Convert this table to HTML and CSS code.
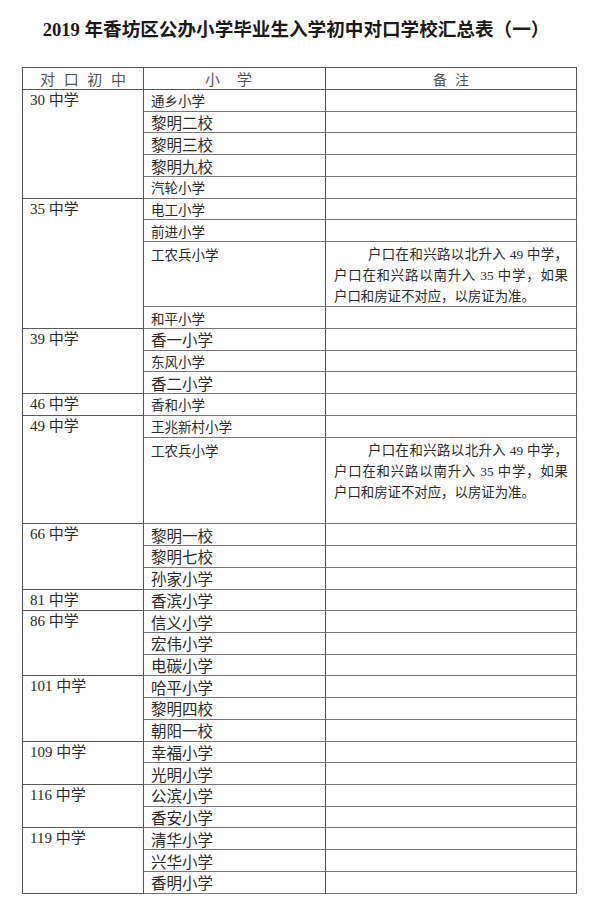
FILE: index.html
```html
<!DOCTYPE html>
<html lang="zh-CN">
<head>
<meta charset="utf-8">
<title>2019年香坊区公办小学毕业生入学初中对口学校汇总表（一）</title>
<link rel="stylesheet" href="styles.css">
</head>
<body>
<div class="page">
  <h1 class="title">2019 年香坊区公办小学毕业生入学初中对口学校汇总表（一）</h1>
  <div class="sheet">
    <div class="hd c1"><span class="hd-wide">对口初中</span></div>
    <div class="hd c2"><span class="hd-mid">小学</span></div>
    <div class="hd c3"><span class="hd-narrow">备注</span></div>

    <div class="grp c1 span5">30 中学</div>
    <div class="cell c2 sm">通乡小学</div><div class="cell c3"></div>
    <div class="cell c2 lg">黎明二校</div><div class="cell c3"></div>
    <div class="cell c2 lg">黎明三校</div><div class="cell c3"></div>
    <div class="cell c2 lg">黎明九校</div><div class="cell c3"></div>
    <div class="cell c2 sm">汽轮小学</div><div class="cell c3"></div>

    <div class="grp c1 span6">35 中学</div>
    <div class="cell c2 sm">电工小学</div><div class="cell c3"></div>
    <div class="cell c2 sm">前进小学</div><div class="cell c3"></div>
    <div class="cell top c2 sm span3">工农兵小学</div>
    <div class="note c3 span3">户口在和兴路以北升入 49 中学，户口在和兴路以南升入 35 中学，如果户口和房证不对应，以房证为准。</div>
    <div class="cell c2 sm">和平小学</div><div class="cell c3"></div>

    <div class="grp c1 span3">39 中学</div>
    <div class="cell c2 lg">香一小学</div><div class="cell c3"></div>
    <div class="cell c2 sm">东风小学</div><div class="cell c3"></div>
    <div class="cell c2 lg">香二小学</div><div class="cell c3"></div>

    <div class="grp c1">46 中学</div>
    <div class="cell c2 sm">香和小学</div><div class="cell c3"></div>

    <div class="grp c1 span5">49 中学</div>
    <div class="cell c2 sm">王兆新村小学</div><div class="cell c3"></div>
    <div class="cell top c2 sm span4">工农兵小学</div>
    <div class="note c3 span4">户口在和兴路以北升入 49 中学，户口在和兴路以南升入 35 中学，如果户口和房证不对应，以房证为准。</div>

    <div class="grp c1 span3">66 中学</div>
    <div class="cell c2 lg">黎明一校</div><div class="cell c3"></div>
    <div class="cell c2 lg">黎明七校</div><div class="cell c3"></div>
    <div class="cell c2 lg">孙家小学</div><div class="cell c3"></div>

    <div class="grp c1">81 中学</div>
    <div class="cell c2 lg">香滨小学</div><div class="cell c3"></div>

    <div class="grp c1 span3">86 中学</div>
    <div class="cell c2 lg">信义小学</div><div class="cell c3"></div>
    <div class="cell c2 lg">宏伟小学</div><div class="cell c3"></div>
    <div class="cell c2 lg">电碳小学</div><div class="cell c3"></div>

    <div class="grp c1 span3">101 中学</div>
    <div class="cell c2 lg">哈平小学</div><div class="cell c3"></div>
    <div class="cell c2 lg">黎明四校</div><div class="cell c3"></div>
    <div class="cell c2 lg">朝阳一校</div><div class="cell c3"></div>

    <div class="grp c1 span2">109 中学</div>
    <div class="cell c2 lg">幸福小学</div><div class="cell c3"></div>
    <div class="cell c2 lg">光明小学</div><div class="cell c3"></div>

    <div class="grp c1 span2">116 中学</div>
    <div class="cell c2 lg">公滨小学</div><div class="cell c3"></div>
    <div class="cell c2 lg">香安小学</div><div class="cell c3"></div>

    <div class="grp c1 span3">119 中学</div>
    <div class="cell c2 lg">清华小学</div><div class="cell c3"></div>
    <div class="cell c2 lg">兴华小学</div><div class="cell c3"></div>
    <div class="cell c2 lg">香明小学</div><div class="cell c3"></div>
  </div>
</div>
</body>
</html>
```

FILE: styles.css
```css
html, body {
  margin: 0;
  padding: 0;
  background: #ffffff;
}

body {
  font-family: "Liberation Serif", "Noto Sans CJK SC", serif;
  color: #262626;
}

.page {
  padding-top: 19px;
  width: 592px;
}

.title {
  margin: 0;
  font-size: 18.6px;
  line-height: 22px;
  font-weight: 700;
  text-align: center;
  color: #1a1a1a;
}

.sheet {
  margin: 26px 0 0 22px;
  width: 555px;
  box-sizing: border-box;
  display: grid;
  grid-template-columns: 121px 182px 251px;
  grid-template-rows: 22px;
  grid-auto-rows: 21.73px;
  border-top: 1px solid #555;
  border-left: 1px solid #555;
}

.c1 { grid-column: 1; }
.c2 { grid-column: 2; }
.c3 { grid-column: 3; }

.span2 { grid-row: span 2; }
.span3 { grid-row: span 3; }
.span4 { grid-row: span 4; }
.span5 { grid-row: span 5; }
.span6 { grid-row: span 6; }

.hd, .grp, .cell, .note {
  box-sizing: border-box;
  border-right: 1px solid #555;
  border-bottom: 1px solid #5a5a5a;
  min-width: 0;
}

.hd {
  display: flex;
  align-items: center;
  justify-content: center;
  font-size: 15px;
  color: #555;
}

.hd-wide {
  letter-spacing: 8.6px;
  padding-left: 8.6px;
}

.hd-mid {
  letter-spacing: 17px;
  padding-left: 5px;
}

.hd-narrow {
  letter-spacing: 8px;
  padding-left: 8px;
  font-size: 14px;
}

.grp {
  padding-left: 7px;
  font-size: 15px;
  line-height: 21px;
  color: #2a2a2a;
}

.cell {
  display: flex;
  align-items: center;
  padding-left: 7px;
  color: #2a2a2a;
  border-bottom-color: #777;
}

.cell.top {
  align-items: flex-start;
  padding-top: 2px;
}

.lg { font-size: 15.5px; }
.sm { font-size: 13.5px; }

.note {
  padding: 2px 8px 0 8px;
  font-size: 13.4px;
  line-height: 21px;
  text-indent: 34px;
  text-align: justify;
  color: #2a2a2a;
  border-bottom-color: #777;
}
```
